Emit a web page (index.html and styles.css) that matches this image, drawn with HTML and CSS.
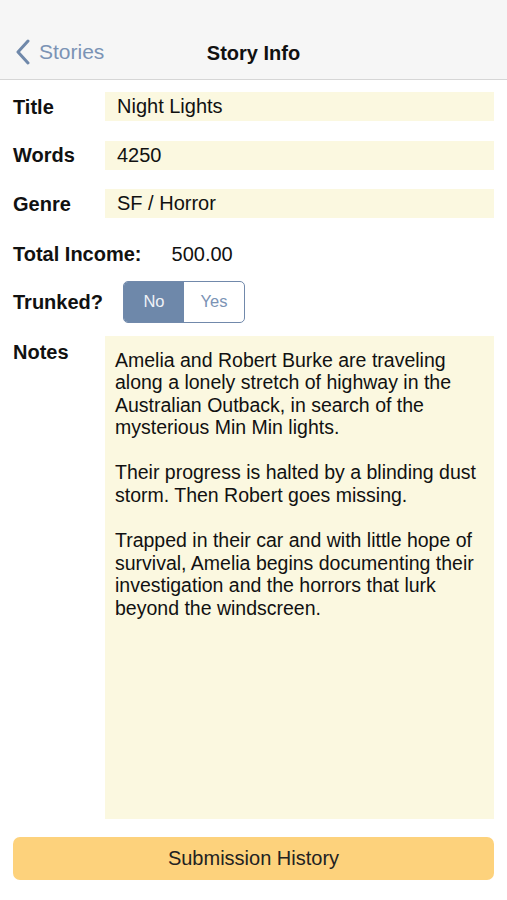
FILE: index.html
```html
<!DOCTYPE html>
<html>
<head>
<meta charset="utf-8">
<link rel="stylesheet" href="styles.css">
</head>
<body>
<header class="nav">
  <div class="back">
    <svg class="chev" width="16" height="26" viewBox="0 0 16 26"><path d="M13 2 L3 13 L13 24" fill="none" stroke="#6f88aa" stroke-width="3" stroke-linecap="round" stroke-linejoin="round"/></svg>
    <span>Stories</span>
  </div>
  <div class="title">Story Info</div>
</header>
<main class="form">
  <div class="row"><div class="label">Title</div><div class="field">Night Lights</div></div>
  <div class="row"><div class="label">Words</div><div class="field">4250</div></div>
  <div class="row"><div class="label">Genre</div><div class="field">SF / Horror</div></div>
  <div class="row income"><div class="label">Total Income:</div><div class="value">500.00</div></div>
  <div class="row trunk"><div class="label">Trunked?</div>
    <div class="seg"><div class="opt on">No</div><div class="opt">Yes</div></div>
  </div>
  <div class="row notes"><div class="label">Notes</div>
    <div class="notebox">
      <p>Amelia and Robert Burke are traveling along a lonely stretch of highway in the Australian Outback, in search of the mysterious Min Min lights.</p>
      <p>Their progress is halted by a blinding dust storm. Then Robert goes missing.</p>
      <p>Trapped in their car and with little hope of survival, Amelia begins documenting their investigation and the horrors that lurk beyond the windscreen.</p>
    </div>
  </div>
  <div class="btn">Submission History</div>
</main>
</body>
</html>
```
FILE: styles.css
```css
* { box-sizing: border-box; }
html, body { margin: 0; padding: 0; background: #fff; }
body { font-family: "Liberation Sans", Arial, sans-serif; color: #111; width: 507px; height: 900px; overflow: hidden; }

.nav {
  height: 80px;
  background: #f6f6f6;
  border-bottom: 1px solid #d6d6d6;
  position: relative;
  display: flex;
  align-items: flex-end;
  justify-content: center;
  padding-bottom: 15px;
}
.back {
  position: absolute;
  left: 15px;
  bottom: 14px;
  display: flex;
  align-items: center;
  gap: 8px;
  color: #7b93b5;
  font-size: 21px;
}
.chev { display: block; }
.title { font-weight: bold; font-size: 20px; color: #111; line-height: 22px; }

.form { padding: 12px 13px 0 13px; display: flex; flex-direction: column; }
.row { display: flex; align-items: center; height: 29px; margin-bottom: 19.5px; }
.label { width: 92px; flex: none; font-weight: bold; font-size: 20px; padding-top: 1px; }
.field {
  flex: 1; height: 29px; background: #fbf8e0;
  font-size: 20px; line-height: 29px; padding-left: 12px;
}
.income { margin-top: 2px; margin-bottom: 12px; }
.income .label { width: auto; margin-right: 30px; }
.value { font-size: 20px; padding-top: 1px; }
.trunk { height: 42px; margin-bottom: 13px; }
.trunk .label { width: 110px; }
.seg {
  display: flex; width: 122px; height: 42px;
  border: 1.5px solid #7189ab; border-radius: 5px; overflow: hidden;
}
.opt { flex: 1; display: flex; align-items: center; justify-content: center; font-size: 16.5px; color: #7b93b5; }
.opt.on { background: #6e88aa; color: #eef2f7; flex: none; width: 60px; }
.notes { height: 483px; align-items: flex-start; margin-bottom: 18px; }
.notes .label { padding-top: 5px; }
.notebox {
  flex: 1; height: 483px; background: #fbf8e0;
  padding: 13px 12px 0 10px; font-size: 19.5px; line-height: 22.6px;
}
.notebox p { margin: 0 0 22.6px 0; }
.btn {
  height: 43px; background: #fdd27c; border-radius: 7px;
  display: flex; align-items: center; justify-content: center;
  font-size: 20px; color: #222;
}
```
